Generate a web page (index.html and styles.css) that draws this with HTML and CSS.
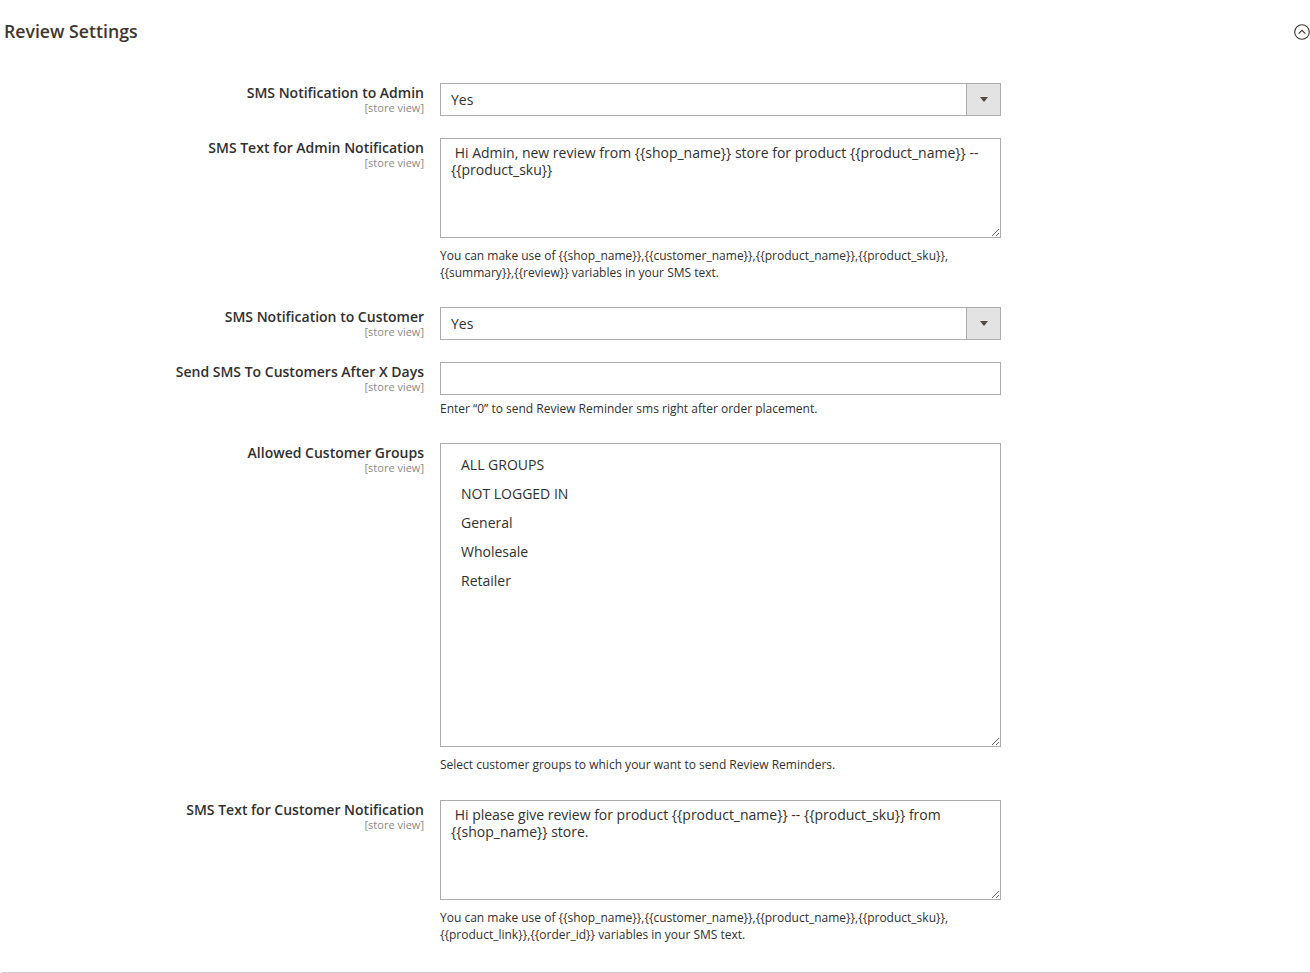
FILE: index.html
```html
<!DOCTYPE html>
<html lang="en">
<head>
  <meta charset="UTF-8">
  <title>Review Settings</title>
  <link rel="stylesheet" href="styles.css">
</head>
<body>
  <div class="section">
    <div class="section-head">
      <h2>Review Settings</h2>
      <span class="collapse">
        <svg width="16" height="16" viewBox="0 0 16 16">
          <circle cx="8" cy="8" r="7.3" fill="none" stroke="#41362f" stroke-width="1.1"/>
          <path d="M4.6 9.6 L8 6.3 L11.4 9.6" fill="none" stroke="#41362f" stroke-width="1.1"/>
        </svg>
      </span>
    </div>

    <div class="fields">
      <div class="row">
        <div class="label"><span>SMS Notification to Admin</span><small>[store view]</small></div>
        <div class="control">
          <div class="select"><span>Yes</span><i class="arrow"></i></div>
        </div>
      </div>

      <div class="row has-note">
        <div class="label"><span>SMS Text for Admin Notification</span><small>[store view]</small></div>
        <div class="control">
          <textarea class="text"> Hi Admin, new review from {{shop_name}} store for product {{product_name}} -- {{product_sku}}</textarea>
          <p class="note">You can make use of {{shop_name}},{{customer_name}},{{product_name}},{{product_sku}}, {{summary}},{{review}} variables in your SMS text.</p>
        </div>
      </div>

      <div class="row">
        <div class="label"><span>SMS Notification to Customer</span><small>[store view]</small></div>
        <div class="control">
          <div class="select"><span>Yes</span><i class="arrow"></i></div>
        </div>
      </div>

      <div class="row has-note">
        <div class="label"><span>Send SMS To Customers After X Days</span><small>[store view]</small></div>
        <div class="control">
          <input class="input" type="text">
          <p class="note">Enter “0” to send Review Reminder sms right after order placement.</p>
        </div>
      </div>

      <div class="row has-note wide-gap">
        <div class="label"><span>Allowed Customer Groups</span><small>[store view]</small></div>
        <div class="control">
          <div class="multiselect">
            <div class="option">ALL GROUPS</div>
            <div class="option">NOT LOGGED IN</div>
            <div class="option">General</div>
            <div class="option">Wholesale</div>
            <div class="option">Retailer</div>
          </div>
          <p class="note">Select customer groups to which your want to send Review Reminders.</p>
        </div>
      </div>

      <div class="row last">
        <div class="label"><span>SMS Text for Customer Notification</span><small>[store view]</small></div>
        <div class="control">
          <textarea class="text"> Hi please give review for product {{product_name}} -- {{product_sku}} from {{shop_name}} store.</textarea>
          <p class="note">You can make use of {{shop_name}},{{customer_name}},{{product_name}},{{product_sku}}, {{product_link}},{{order_id}} variables in your SMS text.</p>
        </div>
      </div>
    </div>
  </div>
</body>
</html>
```

FILE: styles.css
```css
:root {
  --text: #303030;
  --title: #41362f;
  --border: #adadad;
  --muted: #8a8a8a;
}
* { box-sizing: border-box; margin: 0; padding: 0; }
html, body { overflow: hidden; }
body {
  font-family: "Open Sans", "Liberation Sans", sans-serif;
  color: var(--text);
  background: #fff;
}
.section {
  margin-left: 2px;
  padding-bottom: 29px;
  border-bottom: 1px solid #cccccc;
}
.section-head {
  display: flex;
  justify-content: space-between;
  align-items: center;
  padding-top: 20px;
}
.section-head h2 {
  font-size: 17.7px;
  font-weight: 600;
  line-height: 22px;
  color: var(--title);
  padding-left: 2px;
}
.collapse {
  display: flex;
  margin-top: 2px;
}
.fields { margin-top: 41px; }
.row {
  display: flex;
  margin-bottom: 22px;
}
.row.has-note { margin-bottom: 26px; }
.row.wide-gap { margin-bottom: 27px; }
.row.last { margin-bottom: 0; }
.label {
  width: 422px;
  padding-top: 1px;
  display: flex;
  flex-direction: column;
  align-items: flex-end;
  text-align: right;
}
.label span {
  font-size: 14px;
  font-weight: 600;
  line-height: 18px;
}
.label small {
  font-size: 11px;
  line-height: 11px;
  color: var(--muted);
}
.control {
  width: 561px;
  margin-left: 16px;
}
.select {
  display: flex;
  height: 33px;
  border: 1px solid var(--border);
  font-size: 14px;
}
.select span {
  flex: 1;
  line-height: 31px;
  padding-left: 10px;
}
.arrow {
  width: 34px;
  background: #e3e3e3;
  border-left: 1px solid var(--border);
  position: relative;
}
.arrow::after {
  content: "";
  position: absolute;
  left: 13px;
  top: 13px;
  border-left: 4px solid transparent;
  border-right: 4px solid transparent;
  border-top: 5px solid #514943;
}
.input {
  display: block;
  width: 100%;
  height: 33px;
  border: 1px solid var(--border);
  font: inherit;
  font-size: 14px;
  padding: 0 10px;
}
.text {
  display: block;
  width: 100%;
  height: 100px;
  margin-bottom: 9px;
  border: 1px solid var(--border);
  padding: 5px 10px;
  font-family: inherit;
  font-size: 14px;
  line-height: 17px;
  color: var(--text);
  resize: vertical;
}
.multiselect {
  height: 304px;
  margin-bottom: 9px;
  border: 1px solid var(--border);
  padding: 6px 20px;
  overflow: auto;
  resize: vertical;
}
.option {
  font-size: 14px;
  line-height: 29px;
}
.note {
  margin-top: 5px;
  font-size: 12px;
  line-height: 17px;
}
```
